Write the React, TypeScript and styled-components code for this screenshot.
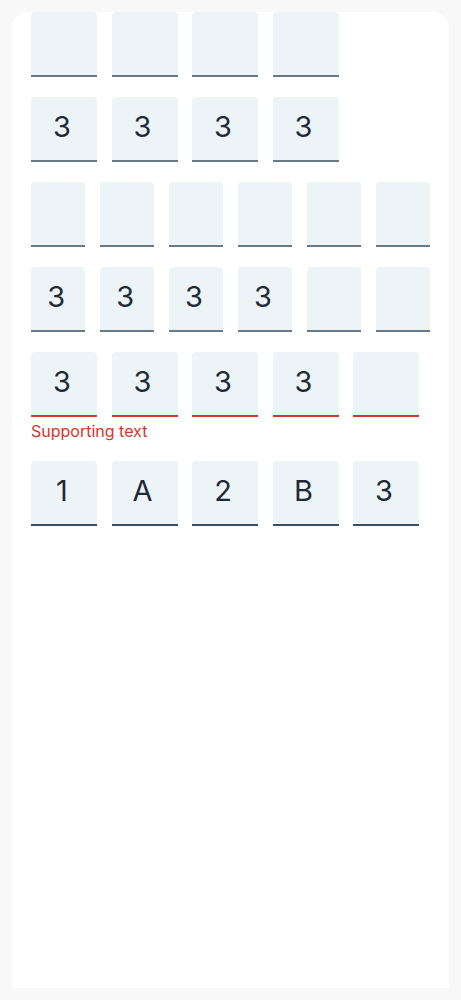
import React from "react";
import styled, { createGlobalStyle } from "styled-components";

const Global = createGlobalStyle`
  html, body { margin: 0; padding: 0; background: #f8f8f9; }
  body { font-family: Inter, Roboto, "Liberation Sans", sans-serif; }
`;

const Card = styled.div`
  margin: 12px 12px 0 12px;
  height: 976px;
  background: #ffffff;
  border-radius: 16px 16px 0 0;
  padding: 0 19px;
  box-sizing: border-box;
  display: flex;
  flex-direction: column;
  gap: 20px;
  overflow: hidden;
`;

const Group = styled.div`
  display: flex;
  flex-direction: column;
`;

const Row = styled.div`
  display: flex;
  gap: 14.5px;
`;

type Tone = "normal" | "error" | "strong";

const Cell = styled.div<{ $tone: Tone; $flex?: boolean }>`
  box-sizing: border-box;
  width: ${(p) => (p.$flex ? "auto" : "66px")};
  flex: ${(p) => (p.$flex ? "1 1 0" : "0 0 66px")};
  height: 65px;
  background: #edf4f8;
  border-radius: 4px 4px 0 0;
  border-bottom: 2px solid
    ${(p) => (p.$tone === "error" ? "#d9342b" : p.$tone === "strong" ? "#3f4d5e" : "#6a7987")};
  display: flex;
  align-items: center;
  justify-content: center;
  font-size: 29px;
  font-weight: 400;
  color: #1f2a37;
  padding: 0 4px 4px 0;
`;

const Support = styled.div`
  margin-top: 4px;
  font-size: 16px;
  line-height: 20px;
  letter-spacing: 0;
  color: #d9342b;
`;

const Boxes = ({ values, tone = "normal", flex }: { values: string[]; tone?: Tone; flex?: boolean }) => (
  <Row>
    {values.map((v, i) => (
      <Cell key={i} $tone={tone} $flex={flex}>
        {v}
      </Cell>
    ))}
  </Row>
);

export default function App() {
  return (
    <>
      <Global />
      <Card>
        <Boxes values={["", "", "", ""]} />
        <Boxes values={["3", "3", "3", "3"]} />
        <Boxes values={["", "", "", "", "", ""]} flex />
        <Boxes values={["3", "3", "3", "3", "", ""]} flex />
        <Group>
          <Boxes values={["3", "3", "3", "3", ""]} tone="error" />
          <Support>Supporting text</Support>
        </Group>
        <Boxes values={["1", "A", "2", "B", "3"]} tone="strong" />
      </Card>
    </>
  );
}
